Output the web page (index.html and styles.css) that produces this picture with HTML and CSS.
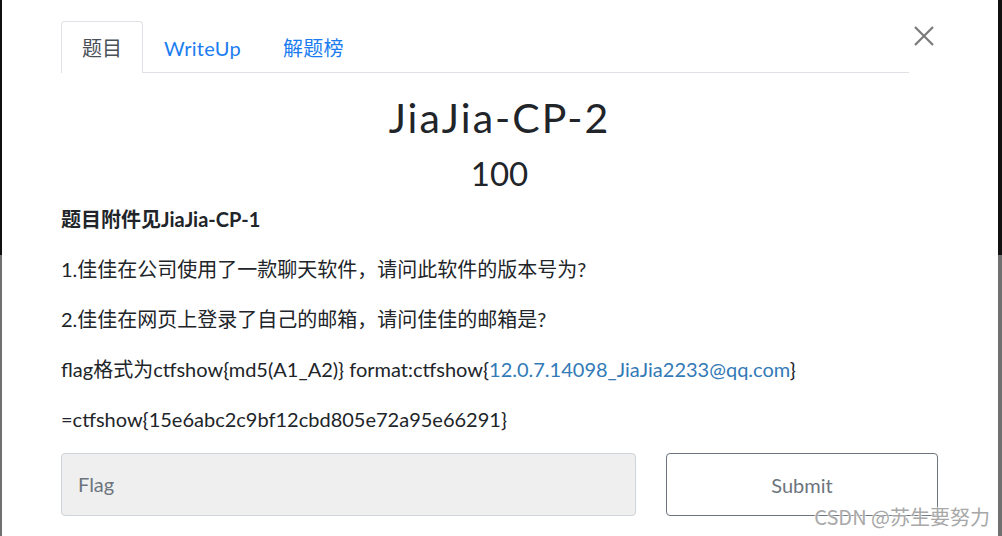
FILE: index.html
```html
<!DOCTYPE html>
<html lang="zh">
<head>
<meta charset="utf-8">
<title>JiaJia-CP-2</title>
<link rel="stylesheet" href="styles.css">
</head>
<body>
<div class="frame">
  <div class="edge edge-left"></div>
  <div class="modal">
    <div class="header">
      <ul class="tabs">
        <li class="tab active">题目</li>
        <li class="tab">WriteUp</li>
        <li class="tab">解题榜</li>
      </ul>
      <button class="close" aria-label="Close">
        <svg width="20" height="20" viewBox="0 0 20 20"><path d="M1 1 L19 19 M19 1 L1 19" stroke="#7a7a7a" stroke-width="2.2" fill="none"/></svg>
      </button>
    </div>
    <h1 class="title">JiaJia-CP-2</h1>
    <div class="score">100</div>
    <div class="desc">
      <p><strong>题目附件见JiaJia-CP-1</strong></p>
      <p>1.佳佳在公司使用了一款聊天软件，请问此软件的版本号为?</p>
      <p>2.佳佳在网页上登录了自己的邮箱，请问佳佳的邮箱是?</p>
      <p>flag格式为ctfshow{md5(A1_A2)} format:ctfshow{<span class="link">12.0.7.14098_JiaJia2233@qq.com</span>}</p>
      <p>=ctfshow{15e6abc2c9bf12cbd805e72a95e66291}</p>
    </div>
    <div class="form">
      <div class="input">Flag</div>
      <button class="submit">Submit</button>
    </div>
  </div>
  <div class="edge edge-right"></div>
  <div class="watermark">CSDN @苏生要努力</div>
</div>
</body>
</html>
```
FILE: styles.css
```css
html, body {
  margin: 0;
  padding: 0;
  background: #fff;
}
body {
  font-family: Lato, "Noto Sans CJK SC", sans-serif;
  color: #212529;
}
.frame {
  display: flex;
  width: 1002px;
  height: 536px;
  overflow: hidden;
  position: relative;
}
.edge {
  background: linear-gradient(#111 0, #111 255px, #707070 255px, #707070 100%);
}
.edge-left { width: 2px; }
.edge-right { width: 4px; }
.modal {
  flex: 1;
  background: #fff;
  padding: 0 60px 0 59px;
  display: flex;
  flex-direction: column;
}
.header {
  display: flex;
  align-items: flex-start;
  padding-top: 21px;
}
.tabs {
  flex: 1;
  list-style: none;
  margin: 0;
  padding: 0;
  display: flex;
  border-bottom: 1px solid #dee2e6;
  height: 51px;
}
.tab {
  padding: 0 20px;
  height: 51px;
  line-height: 52px;
  font-size: 20px;
  letter-spacing: 0.3px;
  color: #1a7cf0;
  border: 1px solid transparent;
  border-bottom: none;
  box-sizing: border-box;
  margin-bottom: -1px;
}
.tab.active {
  color: #495057;
  border-color: #dee2e6;
  border-radius: 4px 4px 0 0;
  background: #fff;
  height: 52px;
  padding: 0 20px;
  letter-spacing: 0;
}
.close {
  border: none;
  background: none;
  padding: 0;
  width: 20px;
  height: 20px;
  margin: 5px 4px 0 5px;
  display: block;
}
.close svg { display: block; }
.title {
  margin: 21px 0 0;
  text-align: center;
  font-size: 41px;
  line-height: 48px;
  font-weight: 400;
  letter-spacing: 2px;
  color: #212529;
}
.score {
  margin-top: 12px;
  text-align: center;
  font-size: 33px;
  line-height: 38px;
  color: #212529;
}
.desc {
  margin-top: 13px;
}
.desc p {
  margin: 0 0 22px;
  font-size: 20px;
  line-height: 28px;
  color: #212529;
}
.desc strong { font-weight: 700; }
.link { color: #337ab7; }
.form {
  display: grid;
  grid-template-columns: 575px 272px;
  column-gap: 30px;
  margin-top: -2px;
}
.input {
  height: 63px;
  box-sizing: border-box;
  border: 1px solid #ced4da;
  border-radius: 4px;
  background: #efefef;
  color: #6c757d;
  font-size: 20px;
  line-height: 61px;
  padding-left: 16px;
}
.submit {
  height: 63px;
  box-sizing: border-box;
  border: 1px solid #6c757d;
  border-radius: 4px;
  background: #fff;
  color: #6c757d;
  font-family: Lato, "Noto Sans CJK SC", sans-serif;
  font-size: 20px;
}
.watermark {
  position: absolute;
  right: 12px;
  top: 504px;
  font-family: "Noto Sans CJK SC", sans-serif;
  font-size: 20px;
  line-height: 25px;
  color: #a8a8a8;
  text-shadow: 0 0 2px #fff, 0 0 2px #fff;
}
```
